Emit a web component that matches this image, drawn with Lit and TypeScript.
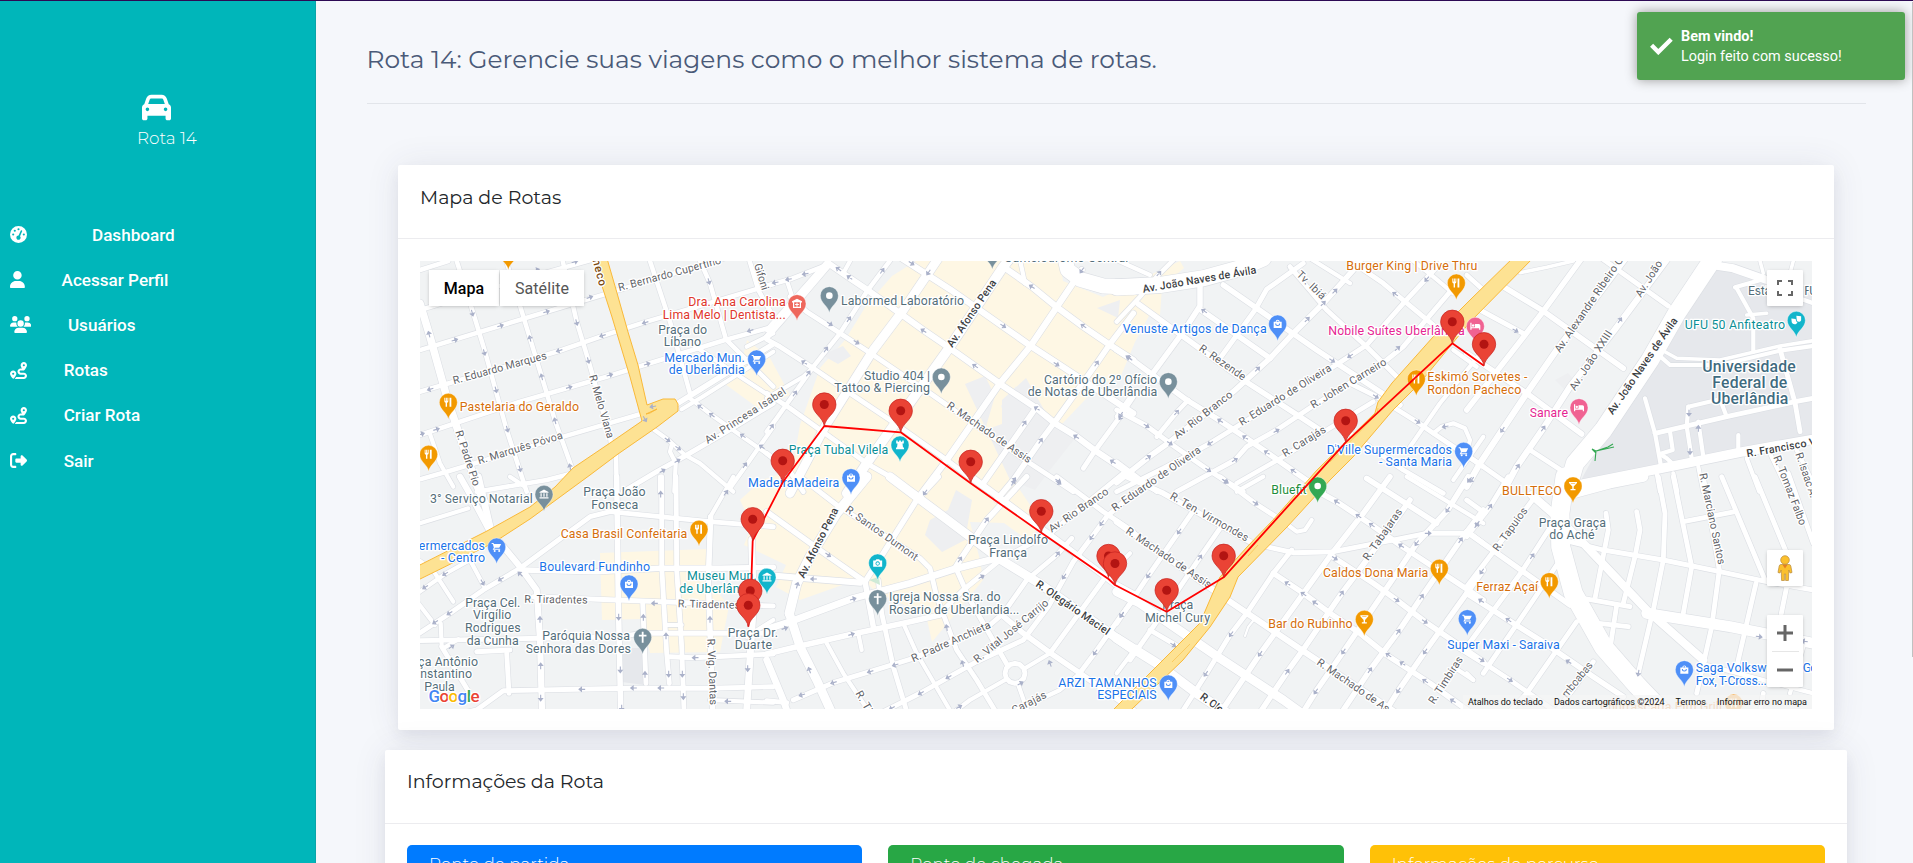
import { LitElement, html, svg, css } from "lit";
import { customElement } from "lit/decorators.js";

/* ---------- map data: every tile stores its geometry in thirds of a pixel ---------- */

interface Tile {
  x: number;
  y: number;
  roads: string;
  arrows: string;
  labels: string[];
  pins: string[];
}

const TILES: Tile[] = [
  {
    x: 410, y: 250,
    roads: `30,60 115,33;30,180 300,98 600,14;30,300 560,140 700,98 960,20;30,425 447,303 580,257 700,218 1090,102;
      30,555 330,455 600,377 712,342 945,270 1090,230;30,688 110,665 460,560 700,490;200,725 410,690 480,672;
      22:30,160 60,260 110,440 150,560 200,705 225,760;140,33 190,190 225,305 290,540 350,725;285,20 360,265 395,380 435,512 490,665;
      455,20 500,215 535,330 600,560 606,600;720,33 780,215 840,430;865,20 900,100 948,268 1090,410;1015,20 1045,120 1090,200;
      16:800,462 860,425 1085,285;12:815,478 875,442 1090,305;14:640,725 740,665 825,618 950,545 1090,460;12:840,445 905,495 1000,562 1090,625;
      12:720,530 775,570 825,615 870,640 970,725;12:960,715 1020,630 1090,530;618,605 620,725;12:785,585 780,605 797,640 793,725;
      12:750,680 750,725;12:850,285 960,360 1090,445;12:60,552 90,640 130,710;12:1010,290 1090,250`,
    arrows: `57,252,-105;187,190,75;223,308,75;258,420,75;292,538,75;330,657,75;360,265,-105;395,380,-105;435,512,-105;480,650,-105;
      500,218,75;535,332,75;135,270,-17;272,227,-17;410,185,-17;540,142,-17;495,35,-17;380,60,-17;60,418,163;447,302,163;577,257,163;
      705,218,163;1020,242,163;35,552,-17;80,538,-17;478,412,-17;600,375,-17;712,342,-17;897,95,75;728,470,170;705,508,60;870,470,215;
      905,495,215;998,557,215;1055,590,215;773,570,35;805,595,35;758,662,-30;803,632,-30;1005,645,-55`,
    labels: [
      "132,403,412,326|s|R. Eduardo Marques", "207,643,460,565|s|R. Marquês Póvoa", "136,545,190,710|s|R. Padre Pio",
      "537,378,592,567|s|R. Melo Viana", "628,124,935,40|s|R. Bernardo Cupertino", "1032,44,1056,122|s|Gifoni",
      "893,582,1130,430|s|Av. Princesa Isabel", "149,483,507,483|o|Pastelaria do Geraldo", "745,251,891,251|g|Praça do",
      "761,289,873,289|g|Líbano", "763,335,1004,335|b|Mercado Mun.", "776,373,1004,373|b|de Uberlândia",
      "835,169,1127,169|r|Dra. Ana Carolina", "758,206,1127,206|r|Lima Melo | Dentista...", "542,10,568,110|h|checo",
    ],
    pins: ["295,60,o,fork", "115,508,o,fork", "56,664,o,fork", "1040,378,b,cart"],
  },
  {
    x: 770, y: 250,
    roads: `26:60,730 165,530 310,300 400,180 505,25;28:230,730 290,640 440,430 540,290 700,50 720,25;13:-10,545 20,505 130,350 210,250 290,125 365,25;
      18:-10,262 40,205 120,110 178,42;12:-10,240 180,25;18:455,730 530,630 690,400 780,290 905,105 935,60;16:680,750 730,690 812,572 860,508 980,340 1020,282 1090,190;
      16:640,700 800,470;14:940,655 975,602 1050,500 1090,440;18:395,25 540,118 700,230 785,290 870,345 1090,490;
      18:700,50 785,110 865,175 940,230 1020,285 1090,330;18:178,42 240,85 300,125 390,190 460,240 540,295 615,348 695,405 800,475 855,520 920,560 980,605 1090,678;
      14:60,140 110,185 210,250 310,315 420,390 480,430 780,640 865,695 910,725;14:-10,268 30,290 130,355 240,430 360,510 530,630 610,690 660,725;
      14:-10,430 60,475 130,525 290,640 360,680 450,740;-10,107 60,88 178,42;12:50,90 70,150;12:-10,445 100,380 130,352;
      44:885,25 893,60 930,88 1000,108 1090,112;12:750,30 765,100;12:240,33 220,70;14:-10,610 60,665 100,725`,
    arrows: `15,98,170;55,88,170;105,72,170;205,57,215;238,82,215;180,222,33;260,277,33;102,337,213;337,62,-55;237,207,-55;168,298,-55;
      115,370,-55;75,430,-55;5,530,-55;425,40,33;475,68,125;460,242,213;615,348,213;800,475,213;918,560,213;1028,635,213;700,228,33;
      860,343,33;785,110,213;940,228,213;1075,322,213;935,62,125;980,340,-55;763,520,-55;812,572,-55;732,690,-55;865,693,33;1052,502,125`,
    labels: [
      "547,294,680,98|S|Av. Afonso Pena", "528,472,775,640|s|R. Machado de Assis",
      "213,164,582,164|g|Labormed Laboratório", "282,390,480,390|g|Studio 404 |", "193,427,480,427|g|Tattoo & Piercing",
      "822,402,1161,402|g|Cartório do 2º Ofício", "773,439,1162,439|g|de Notas de Uberlândia", "56,612,355,612|t|Praça Tubal Vilela",
      "-66,711,208,711|b|MadeiraMadeira", "703,36,1075,36|g|Camelódromo Central",
    ],
    pins: ["178,188,g,dot", "81,212,r,clinic", "514,432,g,dot", "390,636,t,tower", "243,734,b,bag", "667,58,g,dot"],
  },
  {
    x: 1120, y: 250,
    roads: `48:-10,112 120,105 250,85 360,55 430,25;-10,215 60,140 110,80 165,25;16:240,105 240,168 190,245 80,395;
      14:298,328 405,180 440,118 550,40;16:-10,698 85,622 150,575 340,425 450,325 520,250 610,160 700,60 725,25;110,560 170,487 205,450;
      14:-10,725 130,655 270,580 350,530 640,350 740,285 850,160 975,25;14:170,725 345,630 380,590 470,540 575,470 800,330 850,290 1020,90;
      350,700 490,620 620,540 760,455;16:-10,300 30,325 200,450 300,512 375,562 440,607 520,663 610,725;16:55,162 370,390 540,500 600,540;
      16:240,178 450,325;16:310,105 590,300 640,333 840,465;14:510,50 620,180 740,290 850,400;12:570,25 690,100;14:680,25 790,100 855,155 940,225;
      14:-10,480 80,528 150,580 265,660 320,695 370,725;-10,635 110,725;14:690,400 770,440 890,515 940,550 1090,650;
      14:690,550 850,660 970,730;12:870,590 960,460 1090,300;12:940,550 965,530 1000,520 1035,535 1050,570 1045,590;12:1000,690 1090,560;
      12:-10,500 45,420;12:-10,30 90,75;12:870,25 940,80 1000,130;12:1000,300 1070,350`,
    arrows: `117,70,-50;252,183,213;413,357,-45;562,208,-45;610,160,-45;645,123,-45;825,132,213;920,88,130;28,325,213;170,487,-50;80,528,33;
      150,580,33;265,660,33;318,695,33;85,622,-35;300,512,213;375,562,213;440,607,213;520,663,213;270,580,147;345,630,-30;470,542,-30;
      637,332,33;690,318,147;833,295,-40;768,440,33;893,515,33;975,530,170;1048,690,130;2,495,125`,
    labels: [
      "70,128,410,70|S|Av. João Naves de Ávila", "528,76,605,150|s|Tv. Ibiá", "235,300,368,392|s|R. Rezende", "172,568,340,438|s|Av. Rio Branco",
      "365,528,637,360|s|R. Eduardo de Oliveira", "580,476,802,342|s|R. Johen Carneiro", "495,622,620,545|s|R. Carajás",
      "-16,785,245,605|s|R. Eduardo de Oliveira", "8,249,440,249|b|Venuste Artigos de Dança", "679,60,1072,60|o|Burger King | Drive Thru",
      "625,255,1034,255|p|Nobile Suítes Uberlândia", "922,394,1222,394|o|Eskimó Sorvetes -", "922,431,1204,431|o|Rondon Pacheco",
      "620,612,996,612|b|D'Ville Supermercados", "777,649,996,649|b|- Santa Maria",
    ],
    pins: ["473,273,b,bag", "145,446,g,dot", "1009,150,o,fork", "1066,280,p,bed", "889,438,o,fork", "1031,655,b,cart"],
  },
  {
    x: 1470, y: 250,
    roads: `54:730,25 700,70 620,190 540,330 400,540 315,640 290,725;18:-10,710 30,640 170,430 260,300 440,60 470,20;
      18:100,725 140,650 220,535 300,410 430,245 590,30;16:-10,480 160,262 215,190 335,25;16:100,110 215,180 460,355;14:30,180 160,250;
      14:395,25 595,168;16:-10,310 170,430 335,552;14:180,600 285,668;14:-10,615 110,700;-10,75 40,120;10:150,68 230,52 310,33;
      12:560,310 600,345 750,345 930,302 1030,288;10:575,300 620,325 750,330 930,288 1030,272;12:800,115 850,205 850,305;12:795,112 890,85;
      10:830,195 890,190;14:930,297 975,458 990,545;24:725,45 790,55 890,90;12:890,110 1030,160;14:555,550 770,500 975,455 1030,445;
      12:655,470 650,530 665,625;12:655,470 750,448 770,500;12:525,445 555,550 575,660;12:600,545 608,600 570,612;12:570,612 590,625 612,645;
      12:685,515 700,620;12:805,555 805,605;28:310,708 600,650 820,605 1030,568;12:560,670 570,725;12:610,670 622,725;12:685,650 700,725;
      12:830,625 868,725;12:900,610 955,725;12:980,600 1030,700;10:870,33 880,70;10:970,33 960,70`,
    arrows: `137,242,30;450,210,-55;97,540,125;220,535,-55;143,650,-55;657,490,90;685,535,-90;660,605,90;5,690,125`,
    labels: [
      "270,310,492,-16|s|Av. Alexandre Ribeiro Guim", "513,144,578,40|s|Av. João", "315,424,428,250|s|Av. João XXIII",
      "428,496,624,212|S|Av. João Naves de Ávila", "832,622,1040,585|S|R. Francisco V", "910,622,990,828|s|R. Tomaz Falbo",
      "976,612,1022,745|s|R. Isaac A.", "688,672,745,945|s|R. Marciano Santos", "644,236,945,236|t|UFU 50 Anfiteatro",
      "697,366,977,366|u|Universidade", "727,414,952,414|u|Federal de", "723,462,955,462|u|Uberlândia",
      "179,500,294,500|p|Sanare", "834,135,904,135|g|Esta", "1003,135,1042,135|g|FU",
    ],
    pins: ["979,262,t,mask", "327,524,p,bed", "309,759,o,glass"],
  },
  {
    x: 410, y: 480,
    roads: `18:150,-10 190,60 235,145 330,260 380,330 390,480 396,690;20:205,-10 240,140;12:30,130 175,85;
      14:25,462 120,400 220,330 330,265 540,110 600,95 900,125 1090,140;12:25,338 105,282 180,240;12:75,280 130,365;12:180,240 225,325;
      16:335,270 560,275 750,265 930,265 1090,262;14:370,350 620,360 1090,378;14:25,482 390,475 620,470 700,460 1090,460;14:200,515 300,510;
      14:60,720 200,690 280,632 500,628 670,625 900,625 1090,620;14:780,530 850,533 1090,522;12:900,660 1090,668;
      16:620,-10 625,360 632,690;14:755,-10 755,260 770,520 778,610;14:798,-10 800,270 815,500 822,690;16:902,110 895,300 908,690;
      12:92,430 95,500;14:95,500 185,650;14:290,520 297,640;14:698,370 708,610;12:970,-10 900,112;20:1025,180 1030,380 1010,690;
      12:1010,470 1090,420;12:25,370 75,435;12:100,505 145,478;12:770,435 815,435;12:300,-10 345,20;12:25,240 40,250`,
    arrows: `45,322,148;105,282,148;272,298,148;218,308,60;118,400,148;75,427,148;125,500,-35;330,282,225;390,418,-90;392,557,-90;392,655,90;
      515,628,180;670,624,180;752,624,180;626,412,90;631,570,90;733,370,180;700,412,-90;705,583,-90;768,467,-90;776,583,90;817,583,90;
      820,650,90;900,418,-90;855,533,180;953,664,180;1013,566,90;752,42,-90;948,38,-55;635,685,90`,
    labels: [
      "343,368,533,371|s|R. Tiradentes", "803,382,990,386|s|R. Tiradentes", "892,476,900,675|s|R. Vig. Dantas",
      "60,69,368,69|g|3° Serviço Notarial", "520,48,707,48|g|Praça João", "544,86,685,86|g|Fonseca",
      "452,174,832,174|o|Casa Brasil Confeitaria", "-37,209,225,209|b|Supermercados", "93,247,225,247|b|- Centro",
      "388,273,720,273|b|Boulevard Fundinho", "831,300,1040,300|t|Museu Mun.", "808,338,1040,338|t|de Uberlândia",
      "166,381,331,381|g|Praça Cel.", "189,418,304,418|g|Virgílio", "165,456,332,456|g|Rodrigues", "170,494,326,494|g|da Cunha",
      "397,480,660,480|g|Paróquia Nossa", "347,518,663,518|g|Senhora das Dores", "-32,558,204,558|g|Praça Antônio",
      "-15,595,186,595|g|Constantino", "43,632,134,632|g|Paula", "953,470,1104,470|g|Praça Dr.", "974,507,1086,507|g|Duarte",
    ],
    pins: ["402,94,g,museum", "867,199,o,fork", "260,252,b,cart", "657,363,b,bag", "1071,343,t,museum", "698,523,g,cross"],
  },
  {
    x: 770, y: 480,
    roads: `28:290,-10 200,100 120,230 80,310 58,400;26:58,400 90,500 140,600 195,720;16:505,-10 440,60 340,220 285,305;
      16:770,-10 650,120 570,240 555,265;14:1060,-20 840,160 690,240 580,330 510,400;14:1090,40 1010,110 965,172 910,245 835,380 760,480 620,545 535,592 450,640 340,695;
      14:1090,360 1055,405 975,518 925,585;14:1000,300 840,520;14:70,660 190,608 300,575 430,535 660,435 700,400 770,300 863,222 905,175;
      20:-10,448 60,425 250,355 420,310 560,265 690,232;16:-10,522 80,500 245,463 400,430 510,405;18:-10,285 130,297 270,308;
      14:-10,662 50,668;14:90,-10 200,75 450,235 480,265 500,350 560,510 620,600 680,700;16:-10,95 170,225 285,305 310,440;
      14:325,300 335,400 370,560 412,700;12:400,430 440,520 545,700;26:360,-10 460,65 690,238 800,305 1020,460 1090,510;
      18:610,-5 860,180 1035,312 1090,342;14:560,270 600,360 712,555;12:745,615 775,700;12:765,565 840,520;12:705,600 600,660 540,705;
      16:690,400 760,460 840,518 930,580 1090,690;20:-10,540 40,660 60,720;12:170,490 220,580 300,700;12:265,460 275,510;
      14:860,-10 1000,95 1090,155;12:930,580 870,630 720,700;
      14:735,550 750,554 761,565 765,580 761,595 750,606 735,610 720,606 709,595 705,580 709,565 720,554 735,550`,
    arrows: `465,38,125;730,8,-55;650,120,-55;570,238,-55;863,222,-55;175,225,35;130,297,180;82,315,-75;250,357,-17;45,445,-17;245,463,-17;
      635,290,-30;530,442,-100;118,570,-110;375,555,163;300,575,163;190,608,163;95,645,163;578,550,-105;535,592,150;452,640,150;
      365,685,150;568,680,-30;752,610,-30;840,550,-110;995,130,125;965,172,125;882,290,125;1055,405,125;975,518,125;866,8,33`,
    labels: [
      "102,296,206,90|S|Av. Afonso Pena", "224,94,435,243|s|R. Santos Dumont", "845,158,1018,40|s|Av. Rio Branco",
      "795,317,1010,466|S|R. Olegário Maciel", "430,547,664,443|s|R. Padre Anchieta", "622,550,838,372|s|R. Vital José Carrijo",
      "256,640,290,700|s|R. Ti", "732,702,832,652|s|Carajás",
      "594,193,834,193|g|Praça Lindolfo", "658,230,771,230|g|França", "357,364,692,364|g|Igreja Nossa Sra. do",
      "357,402,748,402|g|Rosario de Uberlandia...", "865,620,1160,620|b|ARZI TAMANHOS", "982,657,1160,657|b|ESPECIAIS",
    ],
    pins: ["323,300,t,camera", "323,407,g,cross"],
  },
  {
    x: 1120, y: 480,
    roads: `14:-10,430 90,280 180,150 225,85;14:30,540 100,440 240,232 300,145;14:190,690 260,580 330,465 380,400 460,280 515,210;
      16:300,700 420,522 640,215 730,100 810,-10;16:405,720 502,575 545,515 665,340 740,240 870,60;16:535,720 587,635 670,515 830,280 890,190 983,90 1045,-10;
      16:650,720 750,570 835,455 905,350 1022,180 1090,90;16:780,720 835,632 915,515 1090,270;28:-10,475 110,550 230,640 330,705;
      26:-10,335 60,370 220,480 300,535 490,660 580,725;18:-10,125 280,330 315,355 545,510 830,700;16:20,-10 130,40 390,185;
      16:460,280 550,340 630,400 720,460 800,525 930,610 1090,725;14:300,-10 405,70 475,115;16:640,232 760,310 830,360 915,425 1090,545;
      16:595,35 650,65 715,108 755,135 840,195 1090,360;16:740,-5 950,130;14:440,200 520,218 640,215 830,178 920,160 1050,160 1090,190;
      12:1000,560 1060,600;12:860,-10 1090,130;12:350,35 430,-10;12:508,138 530,155 555,150 575,120;6:375,468 385,440 408,412;
      14:90,450 175,500;12:-10,580 50,500;12:-10,260 30,220;14:1010,500 1090,550`,
    arrows: `85,287,125;177,155,125;240,232,-55;160,495,33;257,582,125;333,463,125;420,522,125;502,575,-55;665,340,-55;670,515,125;587,635,125;
      750,570,-55;835,455,-55;835,632,125;905,350,-55;915,515,125;1022,180,-55;983,90,125;1070,135,-55;890,190,125;925,160,0;502,310,213;
      550,342,213;585,368,213;805,525,213;847,550,213;915,603,213;998,662,213;645,235,33;830,360,33;915,425,33;650,65,213;715,108,213;
      755,135,213;843,197,213;315,3,33;407,70,33;5,405,125`,
    labels: [
      "148,55,378,185|s|R. Ten. Virmondes", "15,158,265,325|s|R. Machado de Assis",
      "745,244,848,95|s|R. Tabajaras", "588,552,800,698|s|R. Machado de As", "238,655,300,700|S|R. Ole", "942,674,1030,538|s|R. Timbiras",
      "454,43,560,43|n|Bluefit", "127,388,220,388|g|Praça", "75,425,270,425|g|Michel Cury", "609,291,925,291|o|Caldos Dona Maria",
      "445,444,698,444|o|Bar do Rubinho", "982,506,1319,506|b|Super Maxi - Saraiva",
    ],
    pins: ["593,69,n,dot", "145,663,b,bag", "958,316,o,fork", "733,469,o,glass", "1042,467,b,cart"],
  },
  {
    x: 1470, y: 480,
    roads: `56:285,-10 270,100 272,200 310,340 400,500 500,615 600,720;30:270,50 420,10 520,-10;24:185,45 260,110 350,200 530,390 700,540;
      32:530,400 780,440 1030,490;14:565,-10 585,100 580,240 550,390;14:500,95 510,150 495,230 460,370;14:408,100 415,150 375,355;
      14:300,185 400,210 580,240 750,275 890,305 1030,330;14:610,-10 665,260 640,400;14:700,-10 748,270 725,440 680,640;14:755,-10 885,300;
      14:858,310 800,560;14:855,-10 950,220;14:950,320 930,420;14:640,125 795,95;14:955,-20 1030,190;14:310,350 480,380;14:340,425 475,440;
      14:440,375 418,520;14:542,420 500,600;14:-10,320 70,215 195,50;14:-10,170 60,80 115,-10;14:-10,500 155,275 255,120;
      14:40,580 190,360 290,210;14:90,725 170,640 320,425;14:240,720 370,545;16:-10,155 160,275 300,375;16:-10,340 115,420 210,480 370,590 460,650;
      14:-10,515 120,600 300,725;14:-10,60 45,100;12:690,550 1030,640;12:1000,500 960,640;12:-10,580 10,600;14:880,640 870,700`,
    arrows: `22,132,125;60,80,-55;187,228,-55;35,275,125;115,420,213;33,362,213;295,545,213;35,540,33;120,600,33;505,580,100;868,470,8;1003,484,188`,
    labels: [
      "84,216,174,92|s|R. Tapuios", "290,655,370,556|s|mboabas", "96,45,275,45|o|BULLTECO", "206,140,408,140|g|Praça Graça",
      "238,177,374,177|g|do Aché", "19,333,204,333|o|Ferraz Açaí", "677,577,890,577|b|Saga Volksw", "998,577,1042,577|b|Go",
      "677,614,890,614|b|Fox, T-Cross...", "390,692,756,692|c|Churrascaria Pim Grill",
    ],
    pins: ["309,69,o,glass", "238,356,o,fork", "643,620,b,bag", "791,720,c,fork"],
  },
];

const INK: Record<string, [string, number, number]> = {
  o: ["#d56e0c", 12.4, 400], b: ["#1a73e8", 12.4, 400], g: ["#546e7a", 12.4, 400], s: ["#5f6368", 10.800, 400],
  S: ["#3c4043", 10.800, 500], p: ["#e52592", 12.4, 400], r: ["#e0362c", 12.4, 400], t: ["#0b8f96", 12.4, 400],
  n: ["#1e8e3e", 12.4, 400], u: ["#3f6b7f", 15.800, 500], h: ["#7a4a12", 11.5, 500], c: ["#eda45c", 12.4, 400],
};

const PIN_FILL: Record<string, string> = {
  o: "#f29900", b: "#4e8ff7", g: "#78909c", p: "#f06292", r: "#ee675c", t: "#12b5cb", n: "#34a853", c: "#f5b35c",
};

/* Commercial and campus areas, in page pixels. */
const COMMERCE = [
  "892,276 916,261 1060,261 1063,281 1103,297 1180,261 1184,268 1162,287 1160,315 1150,314 1135,342 1120,378 1100,384 1062,424 1040,416 1020,426 1016,386 1001,406 1010,428 1026,440 1020,490 1038,517 1033,544 1004,523 970,522 980,560 983,580 946,625 932,642 926,615 876,592 862,578 800,600 776,587 786,565 744,545 752,525 740,500 762,480 792,470 800,425 820,368 845,340 866,306",
  "747,340 770,358 790,395 758,408 725,384 743,357",
  "600,553 707,549 708,580 729,606 720,652 650,653 642,619 602,620",
];
const CAMPUS = ["1718,268 1812,288 1812,444 1580,482 1618,412 1650,352", "622,648 643,648 644,685 622,682"];
const BLOCKS = [
  "822,355 843,346 851,356 838,364", "965,384 985,376 995,396 985,430 1002,424 1002,400 1026,378 1050,420 1080,432 1050,470 1035,490 1010,480",
  "930,520 948,510 956,490 972,500 965,540 942,552 925,535", "1097,308 1120,300 1118,318", "1555,380 1568,373 1577,383 1565,390",
];

const HIGHWAYS = [
  "592,255 606,255 617,293 628,332 638,365 647,405 663,399 675,399 678,404 678,411 657,427 618,454 590,475 560,497 530,519 493,543 410,584 410,570 487,531 530,507 555,487 573,468 610,443 642,421 630,377 612,317",
  "1516,255 1470,300 1433,337 1392,383 1378,402 1375,413 1317,470 1273,520 1247,547 1220,577 1212,595 1200,623 1160,663 1120,703 1105,718 1122,718 1133,708 1183,660 1210,627 1230,597 1238,577 1287,527 1330,480 1353,457 1393,410 1420,383 1470,322 1536,255",
];

const STOPS: [number, number][] = [
  [1452.3, 343.3], [1484, 365.7], [824.3, 426], [900.7, 432.3], [1345.7, 442.3], [782.7, 482.3], [970.7, 483.3],
  [1041.3, 532.7], [752.7, 540.7], [1223.7, 577.3], [1108.5, 577.5], [1115, 585], [1166.7, 611.7], [750.3, 612.3], [748.3, 626.7],
];
const ROUTE =
  "748.3,626.7 750.3,612.3 752.7,540.7 782.7,482.3 824.3,426 900.7,432.3 970.7,483.3 1041.3,532.7 1108.5,579 1115,585 1166.7,611.7 1223.7,577.3 1345.7,442.3 1452.3,343.3 1484,365.7";

interface Road { w: number; pts: string; }

const list = (s: string) => s.split(";").map((v) => v.trim()).filter(Boolean);

const ROADS: Road[] = TILES.flatMap((t) =>
  list(t.roads).map((r) => {
    const [head, tail] = r.includes(":") ? r.split(":") : ["13", r];
    const pts = tail.split(/\s+/).map((p) => {
      const [x, y] = p.split(",").map(Number);
      return `${(t.x + x / 3).toFixed(1)},${(t.y + y / 3).toFixed(1)}`;
    });
    return { w: Number(head) / 3, pts: pts.join(" ") };
  })
);

const glyph = (name: string) => {
  switch (name) {
    case "fork":
      return svg`<path fill="#fff" d="M-4 -4.5v3.2c0 1 .6 1.500 1.300 1.700V4.500h1.400V.4C-.6 .2 0 -.3 0 -1.300V-4.500h-.9v3h-.6v-3h-1v3h-.6v-3zM1.200 -4.500V4.500H3V-4.500z"/>`;
    case "bag":
      return svg`<path fill="#fff" fill-rule="evenodd" d="M-4 -2.200h2A2 2 0 0 1 2 -2.200H4V4H-4zM-1.100 -2.200h2.200a1.100 1.100 0 0 0-2.200 0zM-2.500 -.6a2.500 2.500 0 0 0 5 0h-1a1.500 1.500 0 0 1-3 0z"/>`;
    case "cart":
      return svg`<path fill="#fff" d="M-5 -4h1.800l.5 1H4.500L2.600 .8H-1.800l-.5 1H3.500v1H-4l1.200-2.300L-3.900 -3H-5z"/><circle cx="-2" cy="4" r="1" fill="#fff"/><circle cx="2.500" cy="4" r="1" fill="#fff"/>`;
    case "museum":
      return svg`<path fill="#fff" d="M0 -4.800L4.500 -2.400V-1.500H-4.500V-2.400zM-3.500 -1h1.200v3.500h-1.200zM-.6 -1h1.200v3.500h-1.200zM2.300 -1h1.200v3.500h-1.200zM-4.500 3h9v1.200h-9z"/>`;
    case "cross":
      return svg`<path fill="#fff" d="M-.9 -5.500h1.800v3H3.800v1.700H.9V5.500H-.9V-.8H-3.800V-2.500H-.9z"/>`;
    case "camera":
      return svg`<path fill="#fff" fill-rule="evenodd" d="M-4.500 -2.500h2.200l1-1.300H1.500l1 1.300h2V3.800h-9zM0 -1.700a2.200 2.200 0 1 0 .01 0zM0 -.8a1.300 1.300 0 1 1-.01 0z"/>`;
    case "tower":
      return svg`<path fill="#fff" d="M-3.800 -4.500h1.500v1.200h1.400v-1.200h1.800v1.200h1.400v-1.200h1.500V-1.500h-1.300L3 2.500h1V4.200H-4V2.500h1L-2.500 -1.500h-1.300z"/>`;
    case "bed":
      return svg`<path fill="#fff" d="M-5 -3.500h1.200V.8H-.5V-2.400H3.500A1.500 1.500 0 0 1 5 -.9V3.500H3.800V2H-3.800V3.500H-5z"/><circle cx="-2.200" cy="-.8" r="1.200" fill="#fff"/>`;
    case "glass":
      return svg`<path fill="#fff" fill-rule="evenodd" d="M-4 -4h8V-3L.7 .6V3H2.500v1.200h-5V3H-.7V.6L-4 -3zM-1.800 -2.500h3.600l.6-.6h-4.800z"/>`;
    case "clinic":
      return svg`<path fill="#fff" fill-rule="evenodd" d="M0 -5L5 -2.300V-1.200H4V4.300H-4V-1.200H-5V-2.300zM-2.800 -1.300V3.200H2.800V-1.300zM-.5 -1H.5V.4H1.900V1.400H.5V2.800H-.5V1.400H-1.900V.4H-.5z"/>`;
    case "mask":
      return svg`<path fill="#fff" d="M0 -4.500l4.800 .3v4c-1 2-3.200 2-4.300 .5zM-5 -1.800l4.300 .4 .6 2.600 1.200 .5c-.5 3-4.800 3-5.700 .3z"/>`;
    default:
      return svg`<circle r="3.300" fill="#fff"/>`;
  }
};

@customElement("route-map")
class RouteMap extends LitElement {
  static styles = css`
    :host { display: block; position: relative; width: 100%; height: 448px; overflow: hidden; background: #f1f3f4; font-family: Roboto, sans-serif; }
    .canvas { display: block; width: 100%; height: 100%; font-family: Roboto, sans-serif; }
    .halo { paint-order: stroke; stroke: #fff; stroke-width: 2.6px; stroke-linejoin: round; }
    .faint { stroke: none; }
    .types { position: absolute; left: 9px; top: 9px; display: flex; gap: 1px; height: 36px; }
    .type { display: flex; align-items: center; justify-content: center; background: #fff; font-size: 16px; color: #565656; box-shadow: 0 1px 4px -1px rgba(0, 0, 0, .3); width: 84px; letter-spacing: .1px; }
    .type.on { width: 70px; color: #000; font-weight: 500; }
    .box { position: absolute; right: 9px; width: 36px; background: #fff; border-radius: 1px; box-shadow: 0 1px 4px -1px rgba(0, 0, 0, .3); display: flex; flex-direction: column; align-items: center; }
    .full { top: 9px; height: 36px; justify-content: center; }
    .peg { top: 289px; height: 36px; justify-content: center; }
    .zoom { top: 354px; height: 72px; justify-content: space-between; }
    .cell { height: 35px; display: flex; align-items: center; }
    .sep { width: 27px; height: 1px; background: #e6e6e6; }
    .legal { position: absolute; right: 0; bottom: 0; height: 14px; display: flex; background: rgba(245, 245, 245, .7); font-size: 9px; line-height: 14px; color: #111; white-space: nowrap; gap: 11px; padding: 0 5px; }
  `;

  private label(t: Tile, row: string) {
    const cut = row.indexOf("|");
    const [pos, kind, text] = [row.slice(0, cut), row[cut + 1], row.slice(cut + 3)];
    const [a, b, c, d] = pos.split(",").map(Number);
    const len = Math.hypot(c - a, d - b) / 3;
    const ang = (Math.atan2(d - b, c - a) * 180) / Math.PI;
    const [fill, size, weight] = INK[kind];
    return svg`<text class=${kind === "c" ? "faint" : "halo"} transform="translate(${t.x + a / 3} ${t.y + b / 3}) rotate(${ang})"
      fill=${fill} font-size=${size} font-weight=${weight} textLength=${len}>${text}</text>`;
  }

  private pin(t: Tile, row: string) {
    const [x, y, kind, icon] = row.split(",");
    return svg`<g transform="translate(${t.x + Number(x) / 3} ${t.y + Number(y) / 3 - 17})">
      <path d="M0 17C-1.200 10 -9 7.500 -9 0A9 9 0 0 1 9 0C9 7.500 1.200 10 0 17z" fill=${PIN_FILL[kind]} stroke="#fff" stroke-opacity=".6" stroke-width=".6"/>
      ${glyph(icon)}</g>`;
  }

  render() {
    return html`
      <svg class="canvas" viewBox="420 261 1392 448" preserveAspectRatio="none">
        ${COMMERCE.map((p) => svg`<polygon points=${p} fill="#fef7e4"/>`)}
        ${CAMPUS.map((p) => svg`<polygon points=${p} fill="#e6e8ec"/>`)}
        ${BLOCKS.map((p) => svg`<polygon points=${p} fill="#eeeff1"/>`)}
        <g fill="none" stroke="#dcdfe4" stroke-linecap="round" stroke-linejoin="round">
          ${ROADS.map((r) => svg`<polyline points=${r.pts} stroke-width=${r.w + 1.4}/>`)}
        </g>
        <g fill="none" stroke="#fff" stroke-linecap="round" stroke-linejoin="round">
          ${ROADS.map((r) => svg`<polyline points=${r.pts} stroke-width=${r.w + 0.2}/>`)}
        </g>
        ${HIGHWAYS.map((p) => svg`<polygon points=${p} fill="#fde293" stroke="#f9b93a" stroke-width="1"/>`)}
        <path d="M646 414L657 409L650 413z" fill="#fff" stroke="#f9b93a"/>
        <path d="M1378 408L1377 414L1330 462M1258 545L1248 556M1190 644L1172 662" fill="none" stroke="#f9c454" stroke-width=".8"/>
        <path d="M1592 449l4 2 12-4 5-3M1596 451l18-4M1596 451l-1 10M1592 449l4 4" fill="none" stroke="#34a853" stroke-width="1.100"/>
        <path d="M869 580l10-3 1 8z" fill="#ceead6"/>
        <g fill="none" stroke="#aab1c9" stroke-width="1.100">
          ${TILES.flatMap((t) =>
            list(t.arrows).map((a) => {
              const [x, y, r] = a.split(",").map(Number);
              return svg`<path transform="translate(${t.x + x / 3} ${t.y + y / 3}) rotate(${r})" d="M-3.500 0H1.800M.2 -1.900L2.600 0L.2 1.900z"/>`;
            })
          )}
        </g>
        ${TILES.map((t) => t.labels.filter((l) => /\|[sSh]\|/.test(l)).map((l) => this.label(t, l)))}
        ${TILES.map((t) => t.pins.map((p) => this.pin(t, p)))}
        ${TILES.map((t) => t.labels.filter((l) => !/\|[sSh]\|/.test(l)).map((l) => this.label(t, l)))}
        <polyline points=${ROUTE} fill="none" stroke="#f00" stroke-width="1.800" stroke-linejoin="round"/>
        ${STOPS.map(
          ([x, y]) => svg`<g transform="translate(${x} ${y})">
            <path d="M0 0C-1.400 -9 -11.700 -12.500 -11.700 -21.500A11.700 11.700 0 0 1 11.700 -21.500C11.700 -12.500 1.400 -9 0 0z" fill="#ea4335" stroke="#c5221f" stroke-width=".7"/>
            <circle cy="-21.500" r="4.500" fill="#b31412"/></g>`
        )}
        <text class="halo" x="428.500" y="701.500" font-size="17" font-weight="500" textLength="51"
          ><tspan fill="#4285f4">G</tspan><tspan fill="#ea4335">o</tspan><tspan fill="#fbbc04">o</tspan><tspan fill="#4285f4">g</tspan><tspan fill="#34a853">l</tspan><tspan fill="#ea4335">e</tspan></text>
      </svg>
      <div class="types"><div class="type on">Mapa</div><div class="type">Satélite</div></div>
      <div class="box full">
        <svg width="16" height="16" viewBox="0 0 16 16"><path d="M0 5V0H5V2H2V5zM11 0H16V5H14V2H11zM0 11H2V14H5V16H0zM14 11H16V16H11V14H14z" fill="#666"/></svg>
      </div>
      <div class="box peg">
        <svg width="16" height="26" viewBox="0 0 16 26">
          <path d="M4 9.500h8q1.500 0 1.800 1.500l1.200 6.500-2 .5-1.200-3-.4 10.500H8.600V19H7.400v6.500H4.600L4.200 15 3 18l-2-.5L2.200 11Q2.500 9.500 4 9.500z" fill="#fbc02d" stroke="#b98a3a" stroke-width=".7"/>
          <path d="M5.500 9.700L8 13.500l2.500-3.800z" fill="#e57f22"/>
          <circle cx="8" cy="5" r="4.300" fill="#fbc02d" stroke="#b98a3a" stroke-width=".7"/>
        </svg>
      </div>
      <div class="box zoom">
        <div class="cell"><svg width="16" height="16"><path d="M6.500 0h3v6.500H16v3H9.500V16h-3V9.500H0v-3H6.500z" fill="#666"/></svg></div>
        <div class="sep"></div>
        <div class="cell"><svg width="16" height="4"><path d="M0 .500H16V3.500H0z" fill="#666"/></svg></div>
      </div>
      <div class="legal"><span>Atalhos do teclado</span><span>Dados cartográficos ©2024</span><span>Termos</span><span>Informar erro no mapa</span></div>
    `;
  }
}

const ICONS: Record<string, [number, string]> = {
  gauge: [512, "M0 256a256 256 0 1 1 512 0A256 256 0 1 1 0 256zM288 96a32 32 0 1 0-64 0 32 32 0 1 0 64 0zM256 416c35.300 0 64-28.700 64-64c0-17.400-6.900-33.100-18.100-44.600L366 161.700c5.300-12.100-.2-26.300-12.300-31.600s-26.300 .2-31.600 12.300L257.900 288c-.6 0-1.300 0-1.900 0c-35.300 0-64 28.700-64 64s28.700 64 64 64zM176 144a32 32 0 1 0-64 0 32 32 0 1 0 64 0zM96 288a32 32 0 1 0 0-64 32 32 0 1 0 0 64zm352-32a32 32 0 1 0-64 0 32 32 0 1 0 64 0z"],
  user: [448, "M224 256A128 128 0 1 0 224 0a128 128 0 1 0 0 256zm-45.700 48C79.800 304 0 383.800 0 482.300C0 498.700 13.300 512 29.700 512H418.300c16.400 0 29.700-13.300 29.700-29.700C448 383.800 368.200 304 269.700 304H178.300z"],
  users: [640, "M144 0a80 80 0 1 1 0 160A80 80 0 1 1 144 0zM512 0a80 80 0 1 1 0 160A80 80 0 1 1 512 0zM0 298.700C0 239.800 47.800 192 106.700 192h42.700c15.900 0 31 3.500 44.600 9.700c-1.300 7.200-1.900 14.700-1.900 22.300c0 38.200 16.800 72.500 43.300 96H21.300C9.600 320 0 310.400 0 298.700zM405.300 320c26.600-23.500 43.300-57.800 43.300-96c0-7.600-.7-15-1.900-22.300c13.600-6.300 28.700-9.700 44.600-9.700h42.700C592.200 192 640 239.800 640 298.700c0 11.800-9.600 21.300-21.300 21.300H405.300zM224 224a96 96 0 1 1 192 0 96 96 0 1 1-192 0zM128 485.300C128 411.700 187.700 352 261.300 352H378.700C452.300 352 512 411.700 512 485.300c0 14.700-11.900 26.700-26.700 26.700H154.700c-14.700 0-26.700-11.900-26.700-26.700z"],
  route: [512, "M512 96c0 50.200-59.100 125.100-84.600 155c-3.800 4.400-9.400 6.100-14.500 5H320c-17.700 0-32 14.300-32 32s14.300 32 32 32h96c53 0 96 43 96 96s-43 96-96 96H139.600c8.700-9.900 19.300-22.600 30-36.800c6.300-8.400 12.800-17.600 19-27.200H416c17.700 0 32-14.300 32-32s-14.300-32-32-32H320c-53 0-96-43-96-96s43-96 96-96h39.800c-21-31.500-39.800-67.700-39.800-96c0-53 43-96 96-96s96 43 96 96zM117.100 489.100c-3.800 4.300-7.200 8.100-10.100 11.300l-1.800 2-.2-.2c-6 4.600-14.600 4-20-1.800C59.800 473 0 402.500 0 352c0-53 43-96 96-96s96 43 96 96c0 30-21.100 67-43.500 97.900c-10.700 14.700-21.700 28-30.800 38.500l-.6 .7zM128 352a32 32 0 1 0-64 0 32 32 0 1 0 64 0zM416 128a32 32 0 1 0 0-64 32 32 0 1 0 0 64z"],
  exit: [512, "M377.900 105.900L500.700 228.700c7.200 7.200 11.300 17.100 11.300 27.300s-4.100 20.100-11.300 27.300L377.900 406.100c-6.400 6.400-15 9.900-24 9.900c-18.700 0-33.900-15.200-33.900-33.900V320H192c-17.700 0-32-14.300-32-32V224c0-17.700 14.300-32 32-32H320V129.900c0-18.700 15.200-33.900 33.900-33.900c9 0 17.600 3.600 24 9.900zM160 96H96c-17.700 0-32 14.300-32 32V384c0 17.700 14.300 32 32 32h64c17.700 0 32 14.300 32 32s-14.300 32-32 32H96c-53 0-96-43-96-96V128C0 75 43 32 96 32h64c17.700 0 32 14.300 32 32s-14.300 32-32 32z"],
  car: [512, "M135.200 117.400L109.100 192H402.900l-26.100-74.600C372.300 104.600 360.200 96 346.600 96H165.400c-13.600 0-25.700 8.600-30.200 21.400zM39.600 196.800L74.800 96.300C88.300 57.800 124.600 32 165.400 32H346.600c40.800 0 77.100 25.800 90.600 64.300l35.200 100.500c23.200 9.600 39.600 32.500 39.600 59.200V448c0 17.700-14.300 32-32 32H448c-17.700 0-32-14.300-32-32V400H96v48c0 17.700-14.300 32-32 32H32c-17.700 0-32-14.300-32-32V256c0-26.700 16.400-49.600 39.600-59.200zM128 288a32 32 0 1 0-64 0 32 32 0 1 0 64 0zm288 32a32 32 0 1 0 0-64 32 32 0 1 0 0 64z"],
};

const icon = (name: string, size: number) => {
  const [w, d] = ICONS[name];
  return html`<svg width=${(w * size) / 512} height=${size} viewBox="0 0 ${w} 512" fill="#fff"><path fill-rule="evenodd" d=${d}></path></svg>`;
};

@customElement("app-sidebar")
class AppSidebar extends LitElement {
  static styles = css`
    :host { display: flex; flex-direction: column; box-sizing: border-box; width: 316px; height: 100%; background: #00b6ba; border-right: 1px solid #0aa5a9; color: #fff; font-family: Roboto, sans-serif; }
    .brand { display: flex; flex-direction: column; align-items: flex-start; padding: 92px 0 0 137px; }
    .brand svg { margin-left: 5px; }
    .name { font: 300 16.800px/22px Montserrat, Inter, sans-serif; margin-top: 5px; }
    .menu { display: flex; flex-direction: column; padding: 63px 0 0 10px; }
    .item { height: 45.200px; display: flex; align-items: center; gap: 36.700px; font-size: 17.100px; font-weight: 500; }
    .item.wide { gap: 65px; }
  `;
  render() {
    const items: [string, string, string][] = [
      ["gauge", "Dashboard", "wide"], ["user", "Acessar Perfil", ""], ["users", "Usuários", ""],
      ["route", "Rotas", ""], ["route", "Criar Rota", ""], ["exit", "Sair", ""],
    ];
    return html`
      <div class="brand">${icon("car", 29)}<div class="name">Rota 14</div></div>
      <nav class="menu">${items.map(([i, t, c]) => html`<a class="item ${c}">${icon(i, 17)}<span>${t}</span></a>`)}</nav>
    `;
  }
}

@customElement("app-root")
class AppRoot extends LitElement {
  static styles = css`
    :host { display: flex; box-sizing: border-box; position: relative; width: 100%; height: 100vh; overflow: hidden; background: #f5f7fb; border-top: 1px solid #2d0a54; font-family: Roboto, sans-serif; }
    app-sidebar { flex: none; }
    .main { flex: 1; min-width: 0; padding: 0 47px 0 51px; }
    .heading { margin: 0; height: 103px; box-sizing: border-box; padding-top: 41px; border-bottom: 1px solid #e2e5ea; font: 400 24.900px/34px Montserrat, Inter, sans-serif; color: #4a5a78; white-space: nowrap; }
    .heading span { margin-left: -.5px; }
    .card { background: #fff; border-radius: 2px; box-shadow: 0 7px 14px rgba(60, 60, 90, .07), 0 0 35px rgba(60, 60, 90, .09); box-sizing: border-box; }
    .first { margin: 61px 32px 0 31px; height: 565px; }
    .second { margin: 20px 19px 0 18px; height: 400px; position: relative; }
    .title { height: 74px; box-sizing: border-box; border-bottom: 1px solid #ececef; padding: 20px 22px 0; font: 400 19px/26px Montserrat, Inter, sans-serif; color: #23272b; }
    .second .title { padding-top: 19px; }
    .body { padding: 22px; }
    .tiles { display: grid; grid-template-columns: repeat(3, 1fr); gap: 26px; padding: 21px 22px; }
    .tile { height: 130px; box-sizing: border-box; border-radius: 5px; padding: 6px 22px; color: #fff; font: 300 16.800px/26px Montserrat, Inter, sans-serif; }
    .blue { background: #007bff; }
    .green { background: #28a745; }
    .amber { background: #ffc107; }
    .toast { position: absolute; left: 1637px; top: 11px; width: 268px; height: 68px; box-sizing: border-box; border-radius: 3px; background: #51a351; box-shadow: 0 0 12px #999; color: #fff; display: flex; align-items: center; gap: 8px; padding: 2px 0 0 13px; font-size: 14.400px; line-height: 20px; }
    .toast svg { margin-top: -3px; }
    .toast b { display: block; font-weight: 700; }
    .scroll { position: absolute; right: 0; top: 1px; width: 1px; height: 655px; background: #c1c1c1; }
  `;
  render() {
    return html`
      <app-sidebar></app-sidebar>
      <main class="main">
        <h1 class="heading"><span>Rota 14: Gerencie suas viagens como o melhor sistema de rotas.</span></h1>
        <section class="card first">
          <div class="title"><span>Mapa de Rotas</span></div>
          <div class="body"><route-map></route-map></div>
        </section>
        <section class="card second">
          <div class="title"><span>Informações da Rota</span></div>
          <div class="tiles">
            <div class="tile blue">Ponto de partida</div>
            <div class="tile green">Ponto de chegada</div>
            <div class="tile amber">Informações do percurso</div>
          </div>
        </section>
      </main>
      <div class="toast">
        <svg width="23" height="18" viewBox="0 0 23 18"><path d="M1.600 8.300L8.300 15L21.200 2.200" fill="none" stroke="#fff" stroke-width="4.400"/></svg>
        <div><b>Bem vindo!</b>Login feito com sucesso!</div>
      </div>
      <div class="scroll"></div>
    `;
  }
}
